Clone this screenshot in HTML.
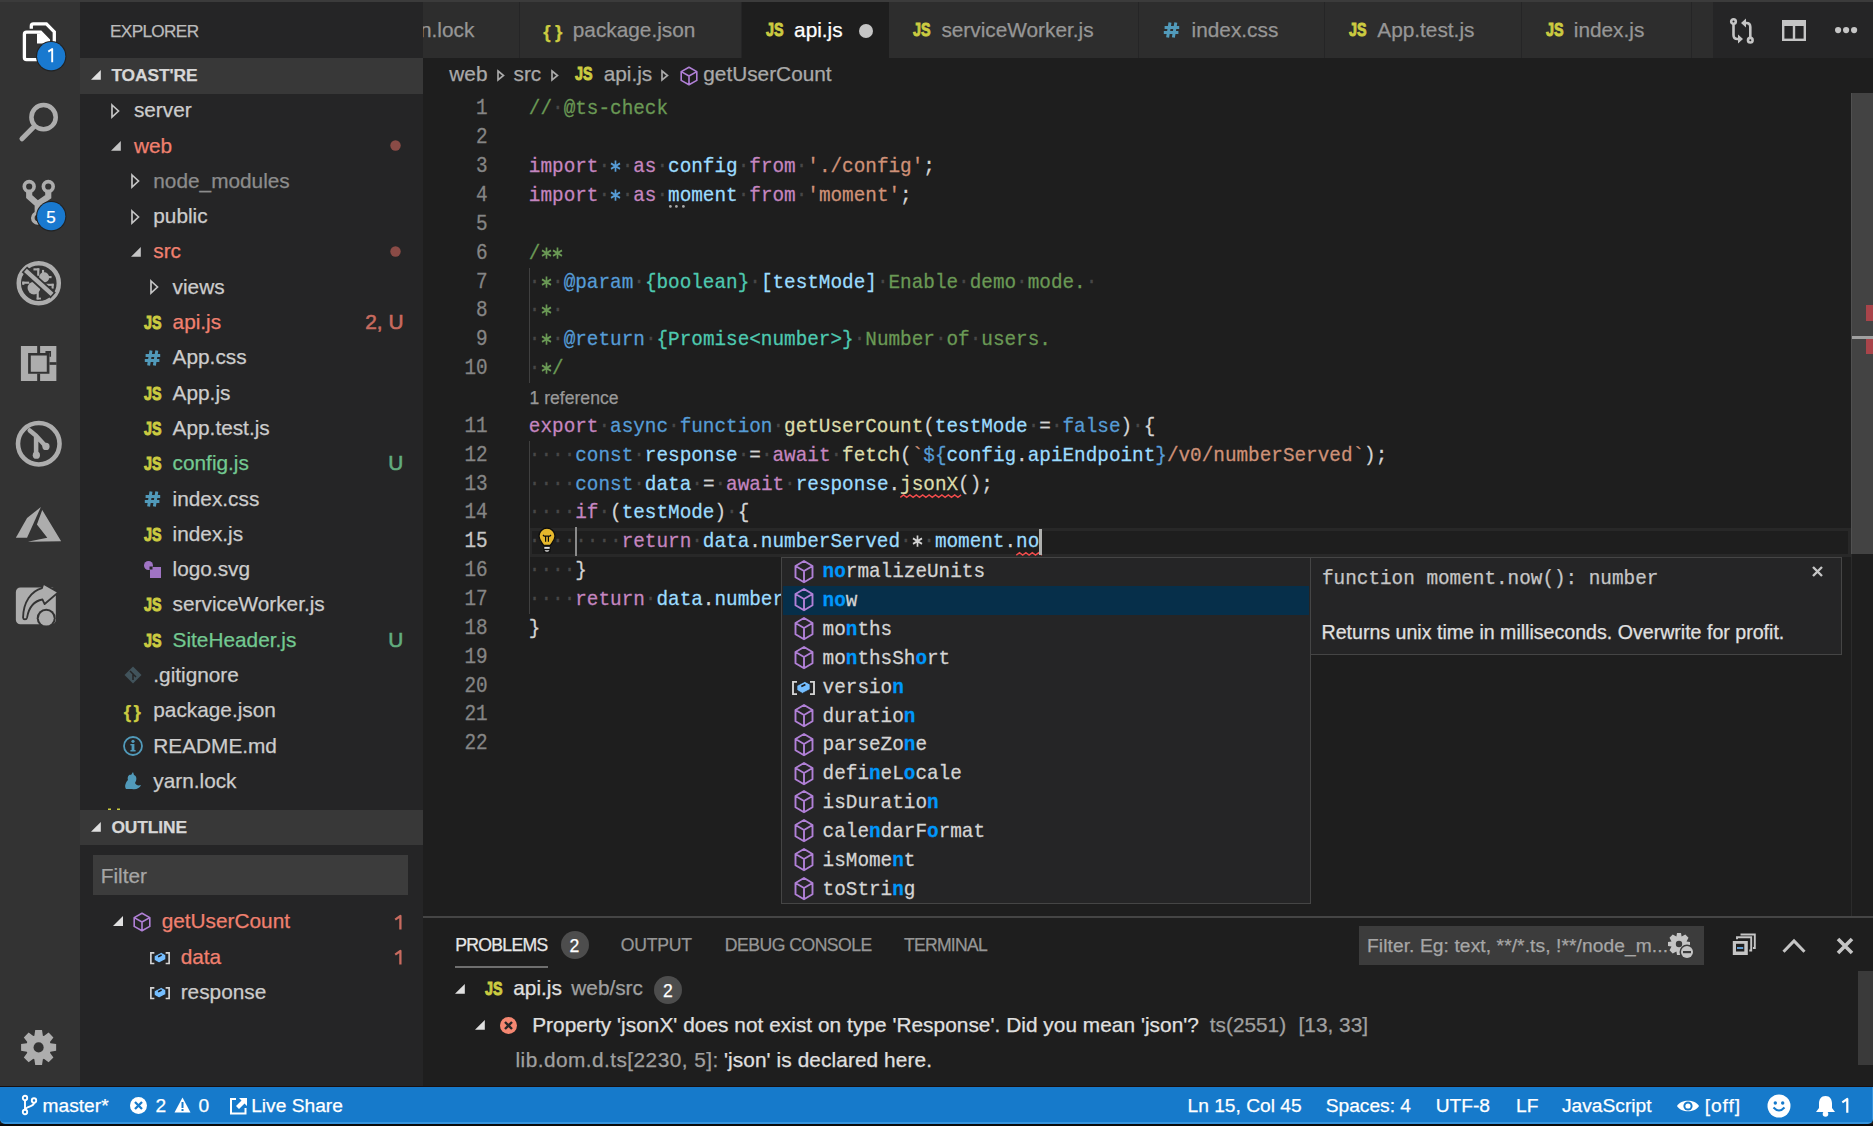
<!DOCTYPE html>
<html><head><meta charset="utf-8">
<style>
*{box-sizing:border-box;margin:0;padding:0}
html,body{width:1873px;height:1126px;overflow:hidden;background:#1e1e1e}
body{position:relative;font-family:"Liberation Sans",sans-serif;color:#cccccc}
.a{position:absolute}
.t{white-space:pre;-webkit-text-stroke:0.25px currentColor}
svg{overflow:visible}
</style></head><body>

<div class="a" style="left:0.00px;top:0.00px;width:1873.00px;height:2.00px;background:#3b3b3b;"></div>
<div class="a" style="left:0.00px;top:2.00px;width:79.50px;height:1085.50px;background:#333333;"></div>
<div class="a" style="left:79.50px;top:2.00px;width:343.00px;height:1085.50px;background:#252526;"></div>
<div class="a" style="left:422.50px;top:2.00px;width:1450.50px;height:56.00px;background:#252526;"></div>
<svg class="a" style="left:10.00px;top:15.00px;" width="60" height="60" viewBox="10 15 60 60">
      <path d="M31.3 31 V26 Q31.3 23.9 33.4 23.9 H46.4 L54.3 31.9 V46" fill="none" stroke="#ffffff" stroke-width="3.3"/>
      <path d="M24.4 34.3 Q24.4 32.2 26.5 32.2 H40.6 L48.4 40.1 V57.6 Q48.4 59.7 46.3 59.7 H26.5 Q24.4 59.7 24.4 57.6 Z" fill="#333333" stroke="#333333" stroke-width="7"/>
      <path d="M24.4 34.3 Q24.4 32.2 26.5 32.2 H40.6 L48.4 40.1 V57.6 Q48.4 59.7 46.3 59.7 H26.5 Q24.4 59.7 24.4 57.6 Z" fill="#333333" stroke="#ffffff" stroke-width="3.3"/>
      <path d="M37 33.5 H41.2 L48.6 41 V43.4 H37 Z" fill="#ffffff"/>
    </svg>
<svg class="a" style="left:37.40px;top:42.40px;" width="28.4" height="28.4" viewBox="0 0 28.4 28.4"><circle cx="14.2" cy="14.2" r="15.2" fill="#222222"/><circle cx="14.2" cy="14.2" r="14.1" fill="#1979cf"/><path d="M11.3 9.6 L15.2 7 V20.2" fill="none" stroke="#ffffff" stroke-width="1.9" stroke-linejoin="round"/></svg>
<svg class="a" style="left:10.00px;top:90.00px;" width="60" height="60" viewBox="0 0 1126 1126"><circle cx="630" cy="510" r="228" fill="none" stroke="#adadad" stroke-width="85"/><path d="M435 705 L225 915" stroke="#adadad" stroke-width="95" stroke-linecap="round"/></svg>
<svg class="a" style="left:10.00px;top:170.00px;" width="60" height="60" viewBox="0 0 1126 1126"><g fill="none" stroke="#adadad">
      <circle cx="360" cy="310" r="92" stroke-width="68"/>
      <circle cx="718" cy="310" r="92" stroke-width="68"/>
      <circle cx="520" cy="900" r="92" stroke-width="68"/>
      <path d="M360 400 V500 L520 640 V810 M718 400 V500 L520 640" stroke-width="115" stroke-linejoin="miter"/>
    </g></svg>
<svg class="a" style="left:37.40px;top:202.30px;" width="28.4" height="28.4" viewBox="0 0 28.4 28.4"><circle cx="14.2" cy="14.2" r="15.2" fill="#222222"/><circle cx="14.2" cy="14.2" r="14.1" fill="#1979cf"/></svg>
<div class="a t" style="left:46.30px;top:208.71px;font-size:17px;line-height:17px;color:#ffffff;font-family:'Liberation Sans',sans-serif;font-weight:400;">5</div>
<svg class="a" style="left:10.00px;top:255.00px;" width="60" height="60" viewBox="0 0 1126 1126">
      <circle cx="540" cy="530" r="376" fill="none" stroke="#adadad" stroke-width="84"/>
      <g fill="#adadad">
        <circle cx="450" cy="620" r="120"/>
        <circle cx="640" cy="420" r="95"/>
        <rect x="230" y="500" width="130" height="40"/>
        <rect x="230" y="500" width="40" height="60"/>
        <rect x="500" y="700" width="40" height="135"/>
        <rect x="500" y="800" width="80" height="35"/>
        <rect x="440" y="250" width="110" height="40"/>
        <rect x="510" y="250" width="40" height="140"/>
        <rect x="600" y="280" width="40" height="100"/>
        <rect x="680" y="395" width="100" height="40"/>
        <rect x="640" y="540" width="180" height="40"/>
        <rect x="780" y="540" width="40" height="90"/>
      </g>
      <path d="M270 270 L810 760" stroke="#333333" stroke-width="150"/>
      <path d="M290 290 L790 740" stroke="#adadad" stroke-width="80"/>
    </svg>
<svg class="a" style="left:10.00px;top:335.00px;" width="60" height="60" viewBox="0 0 1126 1126">
      <path d="M205 205 H870 V865 H205 Z M340 340 V725 H740 V340 Z" fill="#adadad" fill-rule="evenodd"/>
      <rect x="510" y="200" width="55" height="140" fill="#333333"/>
      <rect x="510" y="725" width="55" height="145" fill="#333333"/>
      <rect x="740" y="510" width="135" height="50" fill="#333333"/>
      <path d="M665 300 H770 V410 H740 V340 H665 Z" fill="#333333"/>
      <rect x="390" y="385" width="300" height="305" fill="#adadad"/>
    </svg>
<svg class="a" style="left:10.00px;top:415.00px;" width="60" height="60" viewBox="0 0 1126 1126">
      <circle cx="540" cy="540" r="390" fill="none" stroke="#adadad" stroke-width="86"/>
      <path d="M370 290 L490 390 V755 M490 390 L670 585" fill="none" stroke="#adadad" stroke-width="85" stroke-linecap="round" stroke-linejoin="round"/>
      <circle cx="495" cy="755" r="68" fill="#adadad"/>
      <circle cx="675" cy="590" r="68" fill="#adadad"/>
    </svg>
<svg class="a" style="left:10.00px;top:495.00px;" width="60" height="60" viewBox="0 0 1126 1126">
      <path d="M110 800 L320 430 L580 225 L320 800 Z" fill="#adadad"/>
      <path d="M605 280 L960 870 L330 875 L700 800 L505 555 Z" fill="#adadad"/>
    </svg>
<svg class="a" style="left:10.00px;top:575.00px;" width="60" height="60" viewBox="0 0 1126 1126">
      <rect x="110" y="235" width="750" height="690" rx="85" fill="#adadad"/>
      <path d="M870 300 V245 H600 Z" fill="#333333"/>
      <path d="M245 800 C250 500 400 300 600 245 L625 165 L905 325 L650 545 L610 460 C450 490 350 620 320 800 C310 845 250 845 245 800 Z" fill="#adadad" stroke="#333333" stroke-width="34" stroke-linejoin="round"/>
      <circle cx="680" cy="810" r="178" fill="#333333"/>
      <circle cx="680" cy="810" r="140" fill="#adadad"/>
    </svg>
<svg class="a" style="left:10.00px;top:1018.00px;" width="60" height="60" viewBox="0 0 1126 1126"><path d="M457.1 331.0 L473.2 223.1 L600.8 223.1 L616.9 331.0 L636.7 339.2 L724.4 274.3 L814.7 364.6 L749.8 452.3 L758.0 472.1 L865.9 488.2 L865.9 615.8 L758.0 631.9 L749.8 651.7 L814.7 739.4 L724.4 829.7 L636.7 764.8 L616.9 773.0 L600.8 880.9 L473.2 880.9 L457.1 773.0 L437.3 764.8 L349.6 829.7 L259.3 739.4 L324.2 651.7 L316.0 631.9 L208.1 615.8 L208.1 488.2 L316.0 472.1 L324.2 452.3 L259.3 364.6 L349.6 274.3 L437.3 339.2 Z" fill="#adadad"/><circle cx="537" cy="552" r="95" fill="#333333"/></svg>
<div class="a t" style="left:110.00px;top:22.64px;font-size:17.2px;line-height:17.2px;color:#bbbbbb;font-family:'Liberation Sans',sans-serif;font-weight:400;letter-spacing:-0.65px">EXPLORER</div>
<div class="a" style="left:79.50px;top:58.00px;width:343.00px;height:35.50px;background:#383838;"></div>
<svg class="a" style="left:90.70px;top:70.30px;" width="9.8" height="9.8" viewBox="0 0 9.8 9.8"><path d="M9.8 0 L9.8 9.8 L0 9.8 Z" fill="#e0e0e0"/></svg>
<div class="a t" style="left:111.40px;top:66.87px;font-size:17.4px;line-height:17.4px;color:#d7d7d7;font-family:'Liberation Sans',sans-serif;font-weight:700;letter-spacing:-0.1px">TOAST'RE</div>
<svg class="a" style="left:110.90px;top:103.65px;" width="9" height="14" viewBox="0 0 9 14"><path d="M1 1 L7.5 7 L1 13 Z" fill="none" stroke="#c5c5c5" stroke-width="1.7" stroke-linejoin="miter"/></svg>
<div class="a t" style="left:133.90px;top:100.24px;font-size:20.8px;line-height:20.8px;color:#cccccc;font-family:'Liberation Sans',sans-serif;font-weight:400;">server</div>
<svg class="a" style="left:110.90px;top:140.65px;" width="9.8" height="9.8" viewBox="0 0 9.8 9.8"><path d="M9.8 0 L9.8 9.8 L0 9.8 Z" fill="#c5c5c5"/></svg>
<div class="a t" style="left:133.90px;top:135.54px;font-size:20.8px;line-height:20.8px;color:#f0806f;font-family:'Liberation Sans',sans-serif;font-weight:400;">web</div>
<svg class="a" style="left:390.00px;top:140.45px;" width="11" height="11" viewBox="0 0 11 11"><circle cx="5.5" cy="5.5" r="5.2" fill="#8a4b46"/></svg>
<svg class="a" style="left:130.80px;top:174.25px;" width="9" height="14" viewBox="0 0 9 14"><path d="M1 1 L7.5 7 L1 13 Z" fill="none" stroke="#c5c5c5" stroke-width="1.7" stroke-linejoin="miter"/></svg>
<div class="a t" style="left:153.30px;top:170.84px;font-size:20.8px;line-height:20.8px;color:#8c8c8c;font-family:'Liberation Sans',sans-serif;font-weight:400;">node_modules</div>
<svg class="a" style="left:130.80px;top:209.55px;" width="9" height="14" viewBox="0 0 9 14"><path d="M1 1 L7.5 7 L1 13 Z" fill="none" stroke="#c5c5c5" stroke-width="1.7" stroke-linejoin="miter"/></svg>
<div class="a t" style="left:153.30px;top:206.14px;font-size:20.8px;line-height:20.8px;color:#cccccc;font-family:'Liberation Sans',sans-serif;font-weight:400;">public</div>
<svg class="a" style="left:130.80px;top:246.55px;" width="9.8" height="9.8" viewBox="0 0 9.8 9.8"><path d="M9.8 0 L9.8 9.8 L0 9.8 Z" fill="#c5c5c5"/></svg>
<div class="a t" style="left:153.30px;top:241.44px;font-size:20.8px;line-height:20.8px;color:#f0806f;font-family:'Liberation Sans',sans-serif;font-weight:400;">src</div>
<svg class="a" style="left:390.00px;top:246.35px;" width="11" height="11" viewBox="0 0 11 11"><circle cx="5.5" cy="5.5" r="5.2" fill="#8a4b46"/></svg>
<svg class="a" style="left:150.30px;top:280.15px;" width="9" height="14" viewBox="0 0 9 14"><path d="M1 1 L7.5 7 L1 13 Z" fill="none" stroke="#c5c5c5" stroke-width="1.7" stroke-linejoin="miter"/></svg>
<div class="a t" style="left:172.60px;top:276.74px;font-size:20.8px;line-height:20.8px;color:#cccccc;font-family:'Liberation Sans',sans-serif;font-weight:400;">views</div>
<svg class="a" style="left:144.30px;top:316.05px;" width="18" height="14" viewBox="0 0 18 14"><text x="0" y="12.6" textLength="17.5" lengthAdjust="spacingAndGlyphs" font-family="Liberation Sans" font-weight="700" font-size="17.5" fill="#cbcb41" stroke="#cbcb41" stroke-width="0.9">JS</text></svg>
<div class="a t" style="left:172.60px;top:312.04px;font-size:20.8px;line-height:20.8px;color:#f0806f;font-family:'Liberation Sans',sans-serif;font-weight:400;">api.js</div>
<div class="a t" style="left:365.30px;top:312.04px;font-size:20.8px;line-height:20.8px;color:#c86b5f;font-family:'Liberation Sans',sans-serif;font-weight:400;-webkit-text-stroke:0.6px #c86b5f">2, U</div>
<svg class="a" style="left:144.00px;top:349.95px;" width="18" height="16" viewBox="0 0 18 16"><g stroke="#519aba" stroke-width="3" fill="none"><path d="M7 0.5 L4.6 15.5 M12.8 0.5 L10.4 15.5 M1.6 5.4 H16.2 M0.8 10.6 H15.4"/></g></svg>
<div class="a t" style="left:172.60px;top:347.34px;font-size:20.8px;line-height:20.8px;color:#cccccc;font-family:'Liberation Sans',sans-serif;font-weight:400;">App.css</div>
<svg class="a" style="left:144.30px;top:386.65px;" width="18" height="14" viewBox="0 0 18 14"><text x="0" y="12.6" textLength="17.5" lengthAdjust="spacingAndGlyphs" font-family="Liberation Sans" font-weight="700" font-size="17.5" fill="#cbcb41" stroke="#cbcb41" stroke-width="0.9">JS</text></svg>
<div class="a t" style="left:172.60px;top:382.64px;font-size:20.8px;line-height:20.8px;color:#cccccc;font-family:'Liberation Sans',sans-serif;font-weight:400;">App.js</div>
<svg class="a" style="left:144.30px;top:421.95px;" width="18" height="14" viewBox="0 0 18 14"><text x="0" y="12.6" textLength="17.5" lengthAdjust="spacingAndGlyphs" font-family="Liberation Sans" font-weight="700" font-size="17.5" fill="#cbcb41" stroke="#cbcb41" stroke-width="0.9">JS</text></svg>
<div class="a t" style="left:172.60px;top:417.94px;font-size:20.8px;line-height:20.8px;color:#cccccc;font-family:'Liberation Sans',sans-serif;font-weight:400;">App.test.js</div>
<svg class="a" style="left:144.30px;top:457.25px;" width="18" height="14" viewBox="0 0 18 14"><text x="0" y="12.6" textLength="17.5" lengthAdjust="spacingAndGlyphs" font-family="Liberation Sans" font-weight="700" font-size="17.5" fill="#cbcb41" stroke="#cbcb41" stroke-width="0.9">JS</text></svg>
<div class="a t" style="left:172.60px;top:453.24px;font-size:20.8px;line-height:20.8px;color:#73c991;font-family:'Liberation Sans',sans-serif;font-weight:400;">config.js</div>
<div class="a t" style="left:388.30px;top:453.24px;font-size:20.8px;line-height:20.8px;color:#62ad7e;font-family:'Liberation Sans',sans-serif;font-weight:400;-webkit-text-stroke:0.6px #62ad7e">U</div>
<svg class="a" style="left:144.00px;top:491.15px;" width="18" height="16" viewBox="0 0 18 16"><g stroke="#519aba" stroke-width="3" fill="none"><path d="M7 0.5 L4.6 15.5 M12.8 0.5 L10.4 15.5 M1.6 5.4 H16.2 M0.8 10.6 H15.4"/></g></svg>
<div class="a t" style="left:172.60px;top:488.54px;font-size:20.8px;line-height:20.8px;color:#cccccc;font-family:'Liberation Sans',sans-serif;font-weight:400;">index.css</div>
<svg class="a" style="left:144.30px;top:527.85px;" width="18" height="14" viewBox="0 0 18 14"><text x="0" y="12.6" textLength="17.5" lengthAdjust="spacingAndGlyphs" font-family="Liberation Sans" font-weight="700" font-size="17.5" fill="#cbcb41" stroke="#cbcb41" stroke-width="0.9">JS</text></svg>
<div class="a t" style="left:172.60px;top:523.84px;font-size:20.8px;line-height:20.8px;color:#cccccc;font-family:'Liberation Sans',sans-serif;font-weight:400;">index.js</div>
<svg class="a" style="left:143.30px;top:559.75px;" width="20" height="20" viewBox="0 0 20 20"><circle cx="5.5" cy="5.5" r="4.5" fill="#a074c4"/><rect x="7" y="7" width="11" height="11" fill="#a074c4"/><rect x="6.5" y="6.5" width="3" height="3" fill="#252526"/></svg>
<div class="a t" style="left:172.60px;top:559.14px;font-size:20.8px;line-height:20.8px;color:#cccccc;font-family:'Liberation Sans',sans-serif;font-weight:400;">logo.svg</div>
<svg class="a" style="left:144.30px;top:598.45px;" width="18" height="14" viewBox="0 0 18 14"><text x="0" y="12.6" textLength="17.5" lengthAdjust="spacingAndGlyphs" font-family="Liberation Sans" font-weight="700" font-size="17.5" fill="#cbcb41" stroke="#cbcb41" stroke-width="0.9">JS</text></svg>
<div class="a t" style="left:172.60px;top:594.44px;font-size:20.8px;line-height:20.8px;color:#cccccc;font-family:'Liberation Sans',sans-serif;font-weight:400;">serviceWorker.js</div>
<svg class="a" style="left:144.30px;top:633.75px;" width="18" height="14" viewBox="0 0 18 14"><text x="0" y="12.6" textLength="17.5" lengthAdjust="spacingAndGlyphs" font-family="Liberation Sans" font-weight="700" font-size="17.5" fill="#cbcb41" stroke="#cbcb41" stroke-width="0.9">JS</text></svg>
<div class="a t" style="left:172.60px;top:629.74px;font-size:20.8px;line-height:20.8px;color:#73c991;font-family:'Liberation Sans',sans-serif;font-weight:400;">SiteHeader.js</div>
<div class="a t" style="left:388.30px;top:629.74px;font-size:20.8px;line-height:20.8px;color:#62ad7e;font-family:'Liberation Sans',sans-serif;font-weight:400;-webkit-text-stroke:0.6px #62ad7e">U</div>
<svg class="a" style="left:124.30px;top:665.65px;" width="18" height="18" viewBox="0 0 18 18"><path d="M9 0.5 L17.5 9 L9 17.5 L0.5 9 Z" fill="#41535b"/><path d="M6 5 L10 9 M9 8 V14 M9 8 L12 11" stroke="#252526" stroke-width="1.5"/></svg>
<div class="a t" style="left:153.30px;top:665.04px;font-size:20.8px;line-height:20.8px;color:#cccccc;font-family:'Liberation Sans',sans-serif;font-weight:400;">.gitignore</div>
<div class="a t" style="left:123.80px;top:702.36px;font-size:19px;line-height:19px;color:#cbcb41;font-family:'Liberation Sans',sans-serif;font-weight:700;letter-spacing:-1.5px">{ }</div>
<div class="a t" style="left:153.30px;top:700.34px;font-size:20.8px;line-height:20.8px;color:#cccccc;font-family:'Liberation Sans',sans-serif;font-weight:400;">package.json</div>
<svg class="a" style="left:123.30px;top:735.75px;" width="21" height="21" viewBox="0 0 21 21"><circle cx="10" cy="10" r="9" fill="none" stroke="#519aba" stroke-width="1.8"/><rect x="8.6" y="8" width="2.8" height="7" fill="#519aba"/><rect x="7.4" y="14" width="5.2" height="1.5" fill="#519aba"/><rect x="7.4" y="8" width="3" height="1.4" fill="#519aba"/><circle cx="10" cy="5.3" r="1.6" fill="#519aba"/></svg>
<div class="a t" style="left:153.30px;top:735.64px;font-size:20.8px;line-height:20.8px;color:#cccccc;font-family:'Liberation Sans',sans-serif;font-weight:400;">README.md</div>
<svg class="a" style="left:124.30px;top:770.55px;" width="18" height="20" viewBox="0 0 18 20"><path d="M2 18 C0 15 2 11 4 9 C3 6 5 3 7 4 L9 1 L10 4 C13 5 13 9 11 12 C12 14 14 15 17 14 C16 17 12 19 8 18 Z" fill="#519aba"/></svg>
<div class="a t" style="left:153.30px;top:770.94px;font-size:20.8px;line-height:20.8px;color:#cccccc;font-family:'Liberation Sans',sans-serif;font-weight:400;">yarn.lock</div>
<svg class="a" style="left:106.00px;top:806.50px;" width="16" height="4" viewBox="0 0 16 4"><rect x="2" y="1.5" width="3" height="2.5" fill="#cbcb41"/><rect x="11" y="1.5" width="3" height="2.5" fill="#cbcb41"/></svg>
<div class="a" style="left:79.50px;top:810.10px;width:343.00px;height:35.30px;background:#383838;"></div>
<svg class="a" style="left:90.70px;top:822.30px;" width="9.8" height="9.8" viewBox="0 0 9.8 9.8"><path d="M9.8 0 L9.8 9.8 L0 9.8 Z" fill="#e0e0e0"/></svg>
<div class="a t" style="left:111.40px;top:819.47px;font-size:17.4px;line-height:17.4px;color:#d7d7d7;font-family:'Liberation Sans',sans-serif;font-weight:700;letter-spacing:-0.1px">OUTLINE</div>
<div class="a" style="left:93.10px;top:855.40px;width:315.00px;height:40.00px;background:#3c3c3c;"></div>
<div class="a t" style="left:100.80px;top:865.99px;font-size:20.8px;line-height:20.8px;color:#a6a6a6;font-family:'Liberation Sans',sans-serif;font-weight:400;">Filter</div>
<svg class="a" style="left:112.90px;top:916.20px;" width="10" height="10" viewBox="0 0 10 10"><path d="M10 0 L10 10 L0 10 Z" fill="#e0e0e0"/></svg>
<svg class="a" style="left:132.50px;top:911.50px;" width="18" height="20" viewBox="0 0 18 20"><path d="M9 1.2 L16.8 5.6 V14.4 L9 18.8 L1.2 14.4 V5.6 Z M1.2 5.6 L9 10 L16.8 5.6 M9 10 V18.8" fill="none" stroke="#b180d7" stroke-width="1.6" stroke-linejoin="round"/></svg>
<div class="a t" style="left:161.70px;top:911.39px;font-size:20.8px;line-height:20.8px;color:#f0806f;font-family:'Liberation Sans',sans-serif;font-weight:400;">getUserCount</div>
<svg class="a" style="left:394.00px;top:914.50px;" width="9" height="15" viewBox="0 0 9 15"><path d="M1.2 4.6 L6.4 1 V14.5" fill="none" stroke="#c86b5f" stroke-width="2.3" stroke-linejoin="round"/></svg>
<svg class="a" style="left:149.90px;top:951.50px;" width="20" height="12.3" viewBox="0 0 23 14"><path d="M5 0.9 H1 V13.1 H5 M18 0.9 H22 V13.1 H18" fill="none" stroke="#d4d4d4" stroke-width="1.9"/><path d="M12.9 0.4 L18.1 3.3 V8.4 L10.4 12.4 L4.9 9.2 V4.6 Z" fill="#75beff" stroke="#1a1a1a" stroke-width="0.8"/><path d="M9.3 5.4 L13.4 3.4" stroke="#1a1a1a" stroke-width="1.7"/></svg>
<div class="a t" style="left:180.70px;top:946.69px;font-size:20.8px;line-height:20.8px;color:#f0806f;font-family:'Liberation Sans',sans-serif;font-weight:400;">data</div>
<svg class="a" style="left:394.00px;top:949.80px;" width="9" height="15" viewBox="0 0 9 15"><path d="M1.2 4.6 L6.4 1 V14.5" fill="none" stroke="#c86b5f" stroke-width="2.3" stroke-linejoin="round"/></svg>
<svg class="a" style="left:149.90px;top:986.90px;" width="20" height="12.3" viewBox="0 0 23 14"><path d="M5 0.9 H1 V13.1 H5 M18 0.9 H22 V13.1 H18" fill="none" stroke="#d4d4d4" stroke-width="1.9"/><path d="M12.9 0.4 L18.1 3.3 V8.4 L10.4 12.4 L4.9 9.2 V4.6 Z" fill="#75beff" stroke="#1a1a1a" stroke-width="0.8"/><path d="M9.3 5.4 L13.4 3.4" stroke="#1a1a1a" stroke-width="1.7"/></svg>
<div class="a t" style="left:180.70px;top:982.09px;font-size:20.8px;line-height:20.8px;color:#cccccc;font-family:'Liberation Sans',sans-serif;font-weight:400;">response</div>
<div class="a" style="left:422.5px;top:2px;width:1450.5px;height:56px;overflow:hidden">
<div class="a" style="left:0.00px;top:0.00px;width:97.60px;height:56.00px;background:#2d2d2d;border-right:1.6px solid #252526"></div>
<div class="a t" style="left:-2.50px;top:18.29px;font-size:20.8px;line-height:20.8px;color:#969696;font-family:'Liberation Sans',sans-serif;font-weight:400;">n.lock</div>
<div class="a" style="left:97.60px;top:0.00px;width:222.30px;height:56.00px;background:#2d2d2d;border-right:1.6px solid #252526"></div>
<div class="a t" style="left:120.80px;top:20.41px;font-size:19px;line-height:19px;color:#cbcb41;font-family:'Liberation Sans',sans-serif;font-weight:700;letter-spacing:-0.5px">{ }</div>
<div class="a t" style="left:150.30px;top:18.29px;font-size:20.8px;line-height:20.8px;color:#969696;font-family:'Liberation Sans',sans-serif;font-weight:400;">package.json</div>
<div class="a" style="left:319.90px;top:0.00px;width:146.30px;height:56.00px;background:#1e1e1e;"></div>
<svg class="a" style="left:343.40px;top:21.20px;" width="18" height="14" viewBox="0 0 18 14"><text x="0" y="12.6" textLength="17.5" lengthAdjust="spacingAndGlyphs" font-family="Liberation Sans" font-weight="700" font-size="17.5" fill="#cbcb41" stroke="#cbcb41" stroke-width="0.9">JS</text></svg>
<div class="a t" style="left:371.60px;top:18.29px;font-size:20.8px;line-height:20.8px;color:#ffffff;font-family:'Liberation Sans',sans-serif;font-weight:400;">api.js</div>
<svg class="a" style="left:436.60px;top:21.80px;" width="14" height="14" viewBox="0 0 14 14"><circle cx="7" cy="7" r="7" fill="#c5c5c5"/></svg>
<div class="a" style="left:466.20px;top:0.00px;width:250.50px;height:56.00px;background:#2d2d2d;border-right:1.6px solid #252526"></div>
<svg class="a" style="left:490.70px;top:21.20px;" width="18" height="14" viewBox="0 0 18 14"><text x="0" y="12.6" textLength="17.5" lengthAdjust="spacingAndGlyphs" font-family="Liberation Sans" font-weight="700" font-size="17.5" fill="#cbcb41" stroke="#cbcb41" stroke-width="0.9">JS</text></svg>
<div class="a t" style="left:518.90px;top:18.29px;font-size:20.8px;line-height:20.8px;color:#969696;font-family:'Liberation Sans',sans-serif;font-weight:400;">serviceWorker.js</div>
<div class="a" style="left:716.70px;top:0.00px;width:185.80px;height:56.00px;background:#2d2d2d;border-right:1.6px solid #252526"></div>
<svg class="a" style="left:740.80px;top:20.10px;" width="18" height="16" viewBox="0 0 18 16"><g stroke="#519aba" stroke-width="3" fill="none"><path d="M7 0.5 L4.6 15.5 M12.8 0.5 L10.4 15.5 M1.6 5.4 H16.2 M0.8 10.6 H15.4"/></g></svg>
<div class="a t" style="left:769.10px;top:18.29px;font-size:20.8px;line-height:20.8px;color:#969696;font-family:'Liberation Sans',sans-serif;font-weight:400;">index.css</div>
<div class="a" style="left:902.50px;top:0.00px;width:197.20px;height:56.00px;background:#2d2d2d;border-right:1.6px solid #252526"></div>
<svg class="a" style="left:926.60px;top:21.20px;" width="18" height="14" viewBox="0 0 18 14"><text x="0" y="12.6" textLength="17.5" lengthAdjust="spacingAndGlyphs" font-family="Liberation Sans" font-weight="700" font-size="17.5" fill="#cbcb41" stroke="#cbcb41" stroke-width="0.9">JS</text></svg>
<div class="a t" style="left:954.80px;top:18.29px;font-size:20.8px;line-height:20.8px;color:#969696;font-family:'Liberation Sans',sans-serif;font-weight:400;">App.test.js</div>
<div class="a" style="left:1099.70px;top:0.00px;width:169.60px;height:56.00px;background:#2d2d2d;border-right:1.6px solid #252526"></div>
<svg class="a" style="left:1123.10px;top:21.20px;" width="18" height="14" viewBox="0 0 18 14"><text x="0" y="12.6" textLength="17.5" lengthAdjust="spacingAndGlyphs" font-family="Liberation Sans" font-weight="700" font-size="17.5" fill="#cbcb41" stroke="#cbcb41" stroke-width="0.9">JS</text></svg>
<div class="a t" style="left:1151.30px;top:18.29px;font-size:20.8px;line-height:20.8px;color:#969696;font-family:'Liberation Sans',sans-serif;font-weight:400;">index.js</div>
<div class="a" style="left:1269.30px;top:0.00px;width:21.90px;height:56.00px;background:#2d2d2d;border-right:1.6px solid #252526"></div>
</div>
<svg class="a" style="left:1730.40px;top:17.50px;" width="24" height="26" viewBox="0 0 24 26"><g fill="none" stroke="#c5c5c5" stroke-width="2.6"><circle cx="3.5" cy="3.5" r="2.3"/><circle cx="20.3" cy="22.2" r="2.3"/><path d="M3.5 6 V17 Q3.5 21 7.5 21 H9"/><path d="M20.3 19.8 V9 Q20.3 5 16.3 5 H15"/></g><path d="M8 16.5 L13 21 L8 25.5 Z" fill="#c5c5c5"/><path d="M16 0.5 L11 5 L16 9.5 Z" fill="#c5c5c5"/></svg>
<svg class="a" style="left:1781.50px;top:19.70px;" width="24" height="21" viewBox="0 0 24 21"><rect x="1.2" y="1.2" width="21.6" height="18.6" fill="none" stroke="#c5c5c5" stroke-width="2.4"/><rect x="1" y="1" width="22" height="5" fill="#c5c5c5"/><rect x="10.8" y="1" width="2.4" height="19" fill="#c5c5c5"/></svg>
<svg class="a" style="left:1834.50px;top:26.80px;" width="6.2" height="6.2" viewBox="0 0 6.2 6.2"><circle cx="3.1" cy="3.1" r="3.1" fill="#c5c5c5"/></svg>
<svg class="a" style="left:1842.80px;top:26.80px;" width="6.2" height="6.2" viewBox="0 0 6.2 6.2"><circle cx="3.1" cy="3.1" r="3.1" fill="#c5c5c5"/></svg>
<svg class="a" style="left:1851.00px;top:26.80px;" width="6.2" height="6.2" viewBox="0 0 6.2 6.2"><circle cx="3.1" cy="3.1" r="3.1" fill="#c5c5c5"/></svg>
<div class="a t" style="left:449.30px;top:64.29px;font-size:20.8px;line-height:20.8px;color:#a9a9a9;font-family:'Liberation Sans',sans-serif;font-weight:400;">web</div>
<div class="a t" style="left:513.50px;top:64.29px;font-size:20.8px;line-height:20.8px;color:#a9a9a9;font-family:'Liberation Sans',sans-serif;font-weight:400;">src</div>
<div class="a t" style="left:603.70px;top:64.29px;font-size:20.8px;line-height:20.8px;color:#a9a9a9;font-family:'Liberation Sans',sans-serif;font-weight:400;">api.js</div>
<div class="a t" style="left:703.30px;top:64.29px;font-size:20.8px;line-height:20.8px;color:#a9a9a9;font-family:'Liberation Sans',sans-serif;font-weight:400;">getUserCount</div>
<svg class="a" style="left:496.50px;top:69.50px;" width="8" height="11" viewBox="0 0 8 11"><path d="M1 1 L6.5 5.5 L1 10 Z" fill="none" stroke="#a9a9a9" stroke-width="1.7"/></svg>
<svg class="a" style="left:551.40px;top:69.50px;" width="8" height="11" viewBox="0 0 8 11"><path d="M1 1 L6.5 5.5 L1 10 Z" fill="none" stroke="#a9a9a9" stroke-width="1.7"/></svg>
<svg class="a" style="left:660.90px;top:69.50px;" width="8" height="11" viewBox="0 0 8 11"><path d="M1 1 L6.5 5.5 L1 10 Z" fill="none" stroke="#a9a9a9" stroke-width="1.7"/></svg>
<svg class="a" style="left:575.30px;top:67.40px;" width="18" height="14" viewBox="0 0 18 14"><text x="0" y="12.6" textLength="17.5" lengthAdjust="spacingAndGlyphs" font-family="Liberation Sans" font-weight="700" font-size="17.5" fill="#cbcb41" stroke="#cbcb41" stroke-width="0.9">JS</text></svg>
<svg class="a" style="left:679.60px;top:65.80px;" width="18" height="20" viewBox="0 0 18 20"><path d="M9 1.2 L16.8 5.6 V14.4 L9 18.8 L1.2 14.4 V5.6 Z M1.2 5.6 L9 10 L16.8 5.6 M9 10 V18.8" fill="none" stroke="#b180d7" stroke-width="1.6" stroke-linejoin="round"/></svg>
<div class="a" style="left:528.6px;top:528.20px;width:1322.3px;height:28.86px;border:3px solid #282828"></div>
<div class="a" style="left:528.60px;top:267.66px;width:1.60px;height:115.44px;background:#404040;"></div>
<div class="a" style="left:528.60px;top:440.82px;width:1.60px;height:173.16px;background:#404040;"></div>
<div class="a" style="left:575.20px;top:527.40px;width:1.80px;height:28.86px;background:#8a8a8a;"></div>
<div class="a t" style="left:476.09px;top:100.38px;font-size:19.345px;line-height:19.345px;color:#858585;font-family:'Liberation Mono',monospace;font-weight:400;transform:scaleY(1.1);transform-origin:0 14.77px">1</div>
<div class="a t" style="left:476.09px;top:129.24px;font-size:19.345px;line-height:19.345px;color:#858585;font-family:'Liberation Mono',monospace;font-weight:400;transform:scaleY(1.1);transform-origin:0 14.77px">2</div>
<div class="a t" style="left:476.09px;top:158.10px;font-size:19.345px;line-height:19.345px;color:#858585;font-family:'Liberation Mono',monospace;font-weight:400;transform:scaleY(1.1);transform-origin:0 14.77px">3</div>
<div class="a t" style="left:476.09px;top:186.96px;font-size:19.345px;line-height:19.345px;color:#858585;font-family:'Liberation Mono',monospace;font-weight:400;transform:scaleY(1.1);transform-origin:0 14.77px">4</div>
<div class="a t" style="left:476.09px;top:215.82px;font-size:19.345px;line-height:19.345px;color:#858585;font-family:'Liberation Mono',monospace;font-weight:400;transform:scaleY(1.1);transform-origin:0 14.77px">5</div>
<div class="a t" style="left:476.09px;top:244.68px;font-size:19.345px;line-height:19.345px;color:#858585;font-family:'Liberation Mono',monospace;font-weight:400;transform:scaleY(1.1);transform-origin:0 14.77px">6</div>
<div class="a t" style="left:476.09px;top:273.54px;font-size:19.345px;line-height:19.345px;color:#858585;font-family:'Liberation Mono',monospace;font-weight:400;transform:scaleY(1.1);transform-origin:0 14.77px">7</div>
<div class="a t" style="left:476.09px;top:302.40px;font-size:19.345px;line-height:19.345px;color:#858585;font-family:'Liberation Mono',monospace;font-weight:400;transform:scaleY(1.1);transform-origin:0 14.77px">8</div>
<div class="a t" style="left:476.09px;top:331.26px;font-size:19.345px;line-height:19.345px;color:#858585;font-family:'Liberation Mono',monospace;font-weight:400;transform:scaleY(1.1);transform-origin:0 14.77px">9</div>
<div class="a t" style="left:464.49px;top:360.12px;font-size:19.345px;line-height:19.345px;color:#858585;font-family:'Liberation Mono',monospace;font-weight:400;transform:scaleY(1.1);transform-origin:0 14.77px">10</div>
<div class="a t" style="left:464.49px;top:417.84px;font-size:19.345px;line-height:19.345px;color:#858585;font-family:'Liberation Mono',monospace;font-weight:400;transform:scaleY(1.1);transform-origin:0 14.77px">11</div>
<div class="a t" style="left:464.49px;top:446.70px;font-size:19.345px;line-height:19.345px;color:#858585;font-family:'Liberation Mono',monospace;font-weight:400;transform:scaleY(1.1);transform-origin:0 14.77px">12</div>
<div class="a t" style="left:464.49px;top:475.56px;font-size:19.345px;line-height:19.345px;color:#858585;font-family:'Liberation Mono',monospace;font-weight:400;transform:scaleY(1.1);transform-origin:0 14.77px">13</div>
<div class="a t" style="left:464.49px;top:504.42px;font-size:19.345px;line-height:19.345px;color:#858585;font-family:'Liberation Mono',monospace;font-weight:400;transform:scaleY(1.1);transform-origin:0 14.77px">14</div>
<div class="a t" style="left:464.49px;top:533.28px;font-size:19.345px;line-height:19.345px;color:#c6c6c6;font-family:'Liberation Mono',monospace;font-weight:400;transform:scaleY(1.1);transform-origin:0 14.77px">15</div>
<div class="a t" style="left:464.49px;top:562.14px;font-size:19.345px;line-height:19.345px;color:#858585;font-family:'Liberation Mono',monospace;font-weight:400;transform:scaleY(1.1);transform-origin:0 14.77px">16</div>
<div class="a t" style="left:464.49px;top:591.00px;font-size:19.345px;line-height:19.345px;color:#858585;font-family:'Liberation Mono',monospace;font-weight:400;transform:scaleY(1.1);transform-origin:0 14.77px">17</div>
<div class="a t" style="left:464.49px;top:619.86px;font-size:19.345px;line-height:19.345px;color:#858585;font-family:'Liberation Mono',monospace;font-weight:400;transform:scaleY(1.1);transform-origin:0 14.77px">18</div>
<div class="a t" style="left:464.49px;top:648.72px;font-size:19.345px;line-height:19.345px;color:#858585;font-family:'Liberation Mono',monospace;font-weight:400;transform:scaleY(1.1);transform-origin:0 14.77px">19</div>
<div class="a t" style="left:464.49px;top:677.58px;font-size:19.345px;line-height:19.345px;color:#858585;font-family:'Liberation Mono',monospace;font-weight:400;transform:scaleY(1.1);transform-origin:0 14.77px">20</div>
<div class="a t" style="left:464.49px;top:706.44px;font-size:19.345px;line-height:19.345px;color:#858585;font-family:'Liberation Mono',monospace;font-weight:400;transform:scaleY(1.1);transform-origin:0 14.77px">21</div>
<div class="a t" style="left:464.49px;top:735.30px;font-size:19.345px;line-height:19.345px;color:#858585;font-family:'Liberation Mono',monospace;font-weight:400;transform:scaleY(1.1);transform-origin:0 14.77px">22</div>
<div class="a t" style="left:529.50px;top:390.30px;font-size:17.6px;line-height:17.6px;color:#999999;font-family:'Liberation Sans',sans-serif;font-weight:400;">1 reference</div>
<div class="a t" style="left:528.85px;top:100.38px;font-family:'Liberation Mono',monospace;font-size:19.345px;line-height:19.345px;transform:scaleY(1.06);transform-origin:0 14.82px"><span style="color:#6a9955">//</span><span style="color:#474747;position:relative;top:-1.5px">·</span><span style="color:#6a9955">@ts-check</span></div>
<div class="a t" style="left:528.85px;top:158.10px;font-family:'Liberation Mono',monospace;font-size:19.345px;line-height:19.345px;transform:scaleY(1.06);transform-origin:0 14.82px"><span style="color:#c586c0">import</span><span style="color:#474747;position:relative;top:-1.5px">·</span><span style="color:#569cd6"><span style="position:relative;color:transparent">*<svg style="position:absolute;left:0.3px;top:5.2px" width="11" height="11" viewBox="0 0 11 11"><path d="M5.5 0.3 V10.7 M1 2.9 L10 8.1 M1 8.1 L10 2.9" stroke="#569cd6" stroke-width="1.7"/></svg></span></span><span style="color:#474747;position:relative;top:-1.5px">·</span><span style="color:#c586c0">as</span><span style="color:#474747;position:relative;top:-1.5px">·</span><span style="color:#9cdcfe">config</span><span style="color:#474747;position:relative;top:-1.5px">·</span><span style="color:#c586c0">from</span><span style="color:#474747;position:relative;top:-1.5px">·</span><span style="color:#ce9178">'./config'</span><span style="color:#d4d4d4">;</span></div>
<div class="a t" style="left:528.85px;top:186.96px;font-family:'Liberation Mono',monospace;font-size:19.345px;line-height:19.345px;transform:scaleY(1.06);transform-origin:0 14.82px"><span style="color:#c586c0">import</span><span style="color:#474747;position:relative;top:-1.5px">·</span><span style="color:#569cd6"><span style="position:relative;color:transparent">*<svg style="position:absolute;left:0.3px;top:5.2px" width="11" height="11" viewBox="0 0 11 11"><path d="M5.5 0.3 V10.7 M1 2.9 L10 8.1 M1 8.1 L10 2.9" stroke="#569cd6" stroke-width="1.7"/></svg></span></span><span style="color:#474747;position:relative;top:-1.5px">·</span><span style="color:#c586c0">as</span><span style="color:#474747;position:relative;top:-1.5px">·</span><span style="color:#9cdcfe">moment</span><span style="color:#474747;position:relative;top:-1.5px">·</span><span style="color:#c586c0">from</span><span style="color:#474747;position:relative;top:-1.5px">·</span><span style="color:#ce9178">'moment'</span><span style="color:#d4d4d4">;</span></div>
<div class="a t" style="left:528.85px;top:244.68px;font-family:'Liberation Mono',monospace;font-size:19.345px;line-height:19.345px;transform:scaleY(1.06);transform-origin:0 14.82px"><span style="color:#6a9955">/<span style="position:relative;color:transparent">*<svg style="position:absolute;left:0.3px;top:5.2px" width="11" height="11" viewBox="0 0 11 11"><path d="M5.5 0.3 V10.7 M1 2.9 L10 8.1 M1 8.1 L10 2.9" stroke="#6a9955" stroke-width="1.7"/></svg></span><span style="position:relative;color:transparent">*<svg style="position:absolute;left:0.3px;top:5.2px" width="11" height="11" viewBox="0 0 11 11"><path d="M5.5 0.3 V10.7 M1 2.9 L10 8.1 M1 8.1 L10 2.9" stroke="#6a9955" stroke-width="1.7"/></svg></span></span></div>
<div class="a t" style="left:528.85px;top:273.54px;font-family:'Liberation Mono',monospace;font-size:19.345px;line-height:19.345px;transform:scaleY(1.06);transform-origin:0 14.82px"><span style="color:#474747;position:relative;top:-1.5px">·</span><span style="color:#6a9955"><span style="position:relative;color:transparent">*<svg style="position:absolute;left:0.3px;top:5.2px" width="11" height="11" viewBox="0 0 11 11"><path d="M5.5 0.3 V10.7 M1 2.9 L10 8.1 M1 8.1 L10 2.9" stroke="#6a9955" stroke-width="1.7"/></svg></span></span><span style="color:#474747;position:relative;top:-1.5px">·</span><span style="color:#569cd6">@param</span><span style="color:#474747;position:relative;top:-1.5px">·</span><span style="color:#4ec9b0">{boolean}</span><span style="color:#474747;position:relative;top:-1.5px">·</span><span style="color:#9cdcfe">[testMode]</span><span style="color:#474747;position:relative;top:-1.5px">·</span><span style="color:#6a9955">Enable</span><span style="color:#474747;position:relative;top:-1.5px">·</span><span style="color:#6a9955">demo</span><span style="color:#474747;position:relative;top:-1.5px">·</span><span style="color:#6a9955">mode.</span><span style="color:#474747;position:relative;top:-1.5px">·</span></div>
<div class="a t" style="left:528.85px;top:302.40px;font-family:'Liberation Mono',monospace;font-size:19.345px;line-height:19.345px;transform:scaleY(1.06);transform-origin:0 14.82px"><span style="color:#474747;position:relative;top:-1.5px">·</span><span style="color:#6a9955"><span style="position:relative;color:transparent">*<svg style="position:absolute;left:0.3px;top:5.2px" width="11" height="11" viewBox="0 0 11 11"><path d="M5.5 0.3 V10.7 M1 2.9 L10 8.1 M1 8.1 L10 2.9" stroke="#6a9955" stroke-width="1.7"/></svg></span></span><span style="color:#474747;position:relative;top:-1.5px">·</span></div>
<div class="a t" style="left:528.85px;top:331.26px;font-family:'Liberation Mono',monospace;font-size:19.345px;line-height:19.345px;transform:scaleY(1.06);transform-origin:0 14.82px"><span style="color:#474747;position:relative;top:-1.5px">·</span><span style="color:#6a9955"><span style="position:relative;color:transparent">*<svg style="position:absolute;left:0.3px;top:5.2px" width="11" height="11" viewBox="0 0 11 11"><path d="M5.5 0.3 V10.7 M1 2.9 L10 8.1 M1 8.1 L10 2.9" stroke="#6a9955" stroke-width="1.7"/></svg></span></span><span style="color:#474747;position:relative;top:-1.5px">·</span><span style="color:#569cd6">@return</span><span style="color:#474747;position:relative;top:-1.5px">·</span><span style="color:#4ec9b0">{Promise&lt;number&gt;}</span><span style="color:#474747;position:relative;top:-1.5px">·</span><span style="color:#6a9955">Number</span><span style="color:#474747;position:relative;top:-1.5px">·</span><span style="color:#6a9955">of</span><span style="color:#474747;position:relative;top:-1.5px">·</span><span style="color:#6a9955">users.</span></div>
<div class="a t" style="left:528.85px;top:360.12px;font-family:'Liberation Mono',monospace;font-size:19.345px;line-height:19.345px;transform:scaleY(1.06);transform-origin:0 14.82px"><span style="color:#474747;position:relative;top:-1.5px">·</span><span style="color:#6a9955"><span style="position:relative;color:transparent">*<svg style="position:absolute;left:0.3px;top:5.2px" width="11" height="11" viewBox="0 0 11 11"><path d="M5.5 0.3 V10.7 M1 2.9 L10 8.1 M1 8.1 L10 2.9" stroke="#6a9955" stroke-width="1.7"/></svg></span>/</span></div>
<div class="a t" style="left:528.85px;top:417.84px;font-family:'Liberation Mono',monospace;font-size:19.345px;line-height:19.345px;transform:scaleY(1.06);transform-origin:0 14.82px"><span style="color:#c586c0">export</span><span style="color:#474747;position:relative;top:-1.5px">·</span><span style="color:#569cd6">async</span><span style="color:#474747;position:relative;top:-1.5px">·</span><span style="color:#569cd6">function</span><span style="color:#474747;position:relative;top:-1.5px">·</span><span style="color:#dcdcaa">getUserCount</span><span style="color:#d4d4d4">(</span><span style="color:#9cdcfe">testMode</span><span style="color:#474747;position:relative;top:-1.5px">·</span><span style="color:#d4d4d4">=</span><span style="color:#474747;position:relative;top:-1.5px">·</span><span style="color:#569cd6">false</span><span style="color:#d4d4d4">)</span><span style="color:#474747;position:relative;top:-1.5px">·</span><span style="color:#d4d4d4">{</span></div>
<div class="a t" style="left:528.85px;top:446.70px;font-family:'Liberation Mono',monospace;font-size:19.345px;line-height:19.345px;transform:scaleY(1.06);transform-origin:0 14.82px"><span style="color:#474747;position:relative;top:-1.5px">····</span><span style="color:#569cd6">const</span><span style="color:#474747;position:relative;top:-1.5px">·</span><span style="color:#9cdcfe">response</span><span style="color:#474747;position:relative;top:-1.5px">·</span><span style="color:#d4d4d4">=</span><span style="color:#474747;position:relative;top:-1.5px">·</span><span style="color:#c586c0">await</span><span style="color:#474747;position:relative;top:-1.5px">·</span><span style="color:#dcdcaa">fetch</span><span style="color:#d4d4d4">(</span><span style="color:#ce9178">`</span><span style="color:#569cd6">${</span><span style="color:#9cdcfe">config</span><span style="color:#d4d4d4">.</span><span style="color:#9cdcfe">apiEndpoint</span><span style="color:#569cd6">}</span><span style="color:#ce9178">/v0/numberServed`</span><span style="color:#d4d4d4">)</span><span style="color:#d4d4d4">;</span></div>
<div class="a t" style="left:528.85px;top:475.56px;font-family:'Liberation Mono',monospace;font-size:19.345px;line-height:19.345px;transform:scaleY(1.06);transform-origin:0 14.82px"><span style="color:#474747;position:relative;top:-1.5px">····</span><span style="color:#569cd6">const</span><span style="color:#474747;position:relative;top:-1.5px">·</span><span style="color:#9cdcfe">data</span><span style="color:#474747;position:relative;top:-1.5px">·</span><span style="color:#d4d4d4">=</span><span style="color:#474747;position:relative;top:-1.5px">·</span><span style="color:#c586c0">await</span><span style="color:#474747;position:relative;top:-1.5px">·</span><span style="color:#9cdcfe">response</span><span style="color:#d4d4d4">.</span><span style="color:#dcdcaa">jsonX</span><span style="color:#d4d4d4">();</span></div>
<div class="a t" style="left:528.85px;top:504.42px;font-family:'Liberation Mono',monospace;font-size:19.345px;line-height:19.345px;transform:scaleY(1.06);transform-origin:0 14.82px"><span style="color:#474747;position:relative;top:-1.5px">····</span><span style="color:#c586c0">if</span><span style="color:#474747;position:relative;top:-1.5px">·</span><span style="color:#d4d4d4">(</span><span style="color:#9cdcfe">testMode</span><span style="color:#d4d4d4">)</span><span style="color:#474747;position:relative;top:-1.5px">·</span><span style="color:#d4d4d4">{</span></div>
<div class="a t" style="left:528.85px;top:533.28px;font-family:'Liberation Mono',monospace;font-size:19.345px;line-height:19.345px;transform:scaleY(1.06);transform-origin:0 14.82px"><span style="color:#474747;position:relative;top:-1.5px">········</span><span style="color:#c586c0">return</span><span style="color:#474747;position:relative;top:-1.5px">·</span><span style="color:#9cdcfe">data</span><span style="color:#d4d4d4">.</span><span style="color:#9cdcfe">numberServed</span><span style="color:#474747;position:relative;top:-1.5px">·</span><span style="color:#d4d4d4"><span style="position:relative;color:transparent">*<svg style="position:absolute;left:0.3px;top:5.2px" width="11" height="11" viewBox="0 0 11 11"><path d="M5.5 0.3 V10.7 M1 2.9 L10 8.1 M1 8.1 L10 2.9" stroke="#d4d4d4" stroke-width="1.7"/></svg></span></span><span style="color:#474747;position:relative;top:-1.5px">·</span><span style="color:#9cdcfe">moment</span><span style="color:#d4d4d4">.</span><span style="color:#9cdcfe">no</span></div>
<div class="a t" style="left:528.85px;top:562.14px;font-family:'Liberation Mono',monospace;font-size:19.345px;line-height:19.345px;transform:scaleY(1.06);transform-origin:0 14.82px"><span style="color:#474747;position:relative;top:-1.5px">····</span><span style="color:#d4d4d4">}</span></div>
<div class="a t" style="left:528.85px;top:591.00px;font-family:'Liberation Mono',monospace;font-size:19.345px;line-height:19.345px;transform:scaleY(1.06);transform-origin:0 14.82px"><span style="color:#474747;position:relative;top:-1.5px">····</span><span style="color:#c586c0">return</span><span style="color:#474747;position:relative;top:-1.5px">·</span><span style="color:#9cdcfe">data</span><span style="color:#d4d4d4">.</span><span style="color:#9cdcfe">numberServed</span><span style="color:#d4d4d4">;</span></div>
<div class="a t" style="left:528.85px;top:619.86px;font-family:'Liberation Mono',monospace;font-size:19.345px;line-height:19.345px;transform:scaleY(1.06);transform-origin:0 14.82px"><span style="color:#d4d4d4">}</span></div>
<svg class="a" style="left:538.00px;top:527.00px;" width="18" height="26" viewBox="0 0 18 26"><path d="M5.6 18.3 C4 15.4 1 13.2 1 9 C1 4.6 4.6 1.2 9 1.2 C13.4 1.2 17 4.6 17 9 C17 13.2 14 15.4 12.4 18.3 Z" fill="#e6b82c" stroke="#0d0d0d" stroke-width="1.3"/><path d="M5 8 L6.2 9.2 H11.8 L13 8 M7.6 9.2 V14.8 M10.4 9.2 V14.8" fill="none" stroke="#0d0d0d" stroke-width="1.2"/><rect x="5.5" y="19.2" width="7" height="6.4" rx="1.5" fill="#0d0d0d"/><rect x="6.3" y="19.9" width="5.4" height="1.9" fill="#e2e2e2"/><path d="M6.8 23.2 H11.2 V24 Q9 25.6 6.8 24 Z" fill="#e2e2e2"/></svg>
<svg class="a" style="left:0;top:0" width="1873" height="1126"><path d="M900.3 497.4 L903.5 494.9 L906.7 497.4 L909.9 494.9 L913.1 497.4 L916.3 494.9 L919.5 497.4 L922.7 494.9 L925.9 497.4 L929.1 494.9 L932.3 497.4 L935.5 494.9 L938.7 497.4 L941.9 494.9 L945.1 497.4 L948.3 494.9 L951.5 497.4 L954.7 494.9 L957.9 497.4 L961.1 494.9" fill="none" stroke="#f14c4c" stroke-width="1.4"/></svg>
<svg class="a" style="left:0;top:0" width="1873" height="1126"><path d="M1016.3 555.1 L1019.5 552.6 L1022.7 555.1 L1025.9 552.6 L1029.1 555.1 L1032.3 552.6 L1035.5 555.1 L1038.7 552.6 L1041.9 555.1" fill="none" stroke="#f14c4c" stroke-width="1.4"/></svg>
<div class="a" style="left:1039.26px;top:529.40px;width:2.40px;height:26.00px;background:#aeafad;"></div>
<svg class="a" style="left:668.60px;top:205.30px;" width="2.8" height="2.8" viewBox="0 0 2.8 2.8"><circle cx="1.4" cy="1.4" r="1.4" fill="#a8a8a8"/></svg>
<svg class="a" style="left:675.10px;top:205.30px;" width="2.8" height="2.8" viewBox="0 0 2.8 2.8"><circle cx="1.4" cy="1.4" r="1.4" fill="#a8a8a8"/></svg>
<svg class="a" style="left:681.60px;top:205.30px;" width="2.8" height="2.8" viewBox="0 0 2.8 2.8"><circle cx="1.4" cy="1.4" r="1.4" fill="#a8a8a8"/></svg>
<div class="a" style="left:1850.90px;top:92.80px;width:22.10px;height:461.00px;background:#434343;"></div>
<div class="a" style="left:1850.90px;top:92.80px;width:1.20px;height:461.00px;background:#505050;"></div>
<div class="a" style="left:1866.10px;top:305.20px;width:6.90px;height:16.00px;background:#a8444a;"></div>
<div class="a" style="left:1866.10px;top:338.80px;width:6.90px;height:15.20px;background:#a8444a;"></div>
<div class="a" style="left:1851.50px;top:336.40px;width:21.50px;height:2.80px;background:#a0a0a0;"></div>
<div class="a" style="left:1850.90px;top:553.80px;width:1.20px;height:363.00px;background:#2b2b2b;"></div>
<div class="a" style="left:781.30px;top:556.90px;width:529.70px;height:347.50px;background:#252526;border:1.6px solid #454545"></div>
<div class="a" style="left:782.90px;top:586.30px;width:526.50px;height:28.86px;background:#062f4a;"></div>
<svg class="a" style="left:794.00px;top:559.50px;" width="20" height="24" viewBox="0 0 20 24"><path d="M10 1 L18.5 6 V17.3 L10 22.3 L1.5 17.3 V6 Z M1.5 6 L10 11 L18.5 6 M10 11 V22.3" fill="none" stroke="#b180d7" stroke-width="1.9" stroke-linejoin="round"/></svg>
<div class="a t" style="left:822.6px;top:563.28px;font-family:'Liberation Mono',monospace;font-size:19.345px;line-height:19.345px;color:#d4d4d4;transform:scaleY(1.06);transform-origin:0 14.82px"><span style="color:#0097fb;font-weight:700">n</span><span style="color:#0097fb;font-weight:700">o</span>rmalizeUnits</div>
<svg class="a" style="left:794.00px;top:588.36px;" width="20" height="24" viewBox="0 0 20 24"><path d="M10 1 L18.5 6 V17.3 L10 22.3 L1.5 17.3 V6 Z M1.5 6 L10 11 L18.5 6 M10 11 V22.3" fill="none" stroke="#b180d7" stroke-width="1.9" stroke-linejoin="round"/></svg>
<div class="a t" style="left:822.6px;top:592.14px;font-family:'Liberation Mono',monospace;font-size:19.345px;line-height:19.345px;color:#d4d4d4;transform:scaleY(1.06);transform-origin:0 14.82px"><span style="color:#0097fb;font-weight:700">n</span><span style="color:#0097fb;font-weight:700">o</span>w</div>
<svg class="a" style="left:794.00px;top:617.22px;" width="20" height="24" viewBox="0 0 20 24"><path d="M10 1 L18.5 6 V17.3 L10 22.3 L1.5 17.3 V6 Z M1.5 6 L10 11 L18.5 6 M10 11 V22.3" fill="none" stroke="#b180d7" stroke-width="1.9" stroke-linejoin="round"/></svg>
<div class="a t" style="left:822.6px;top:621.00px;font-family:'Liberation Mono',monospace;font-size:19.345px;line-height:19.345px;color:#d4d4d4;transform:scaleY(1.06);transform-origin:0 14.82px">mo<span style="color:#0097fb;font-weight:700">n</span>ths</div>
<svg class="a" style="left:794.00px;top:646.08px;" width="20" height="24" viewBox="0 0 20 24"><path d="M10 1 L18.5 6 V17.3 L10 22.3 L1.5 17.3 V6 Z M1.5 6 L10 11 L18.5 6 M10 11 V22.3" fill="none" stroke="#b180d7" stroke-width="1.9" stroke-linejoin="round"/></svg>
<div class="a t" style="left:822.6px;top:649.86px;font-family:'Liberation Mono',monospace;font-size:19.345px;line-height:19.345px;color:#d4d4d4;transform:scaleY(1.06);transform-origin:0 14.82px">mo<span style="color:#0097fb;font-weight:700">n</span>thsSh<span style="color:#0097fb;font-weight:700">o</span>rt</div>
<svg class="a" style="left:792.00px;top:680.54px;" width="23" height="14" viewBox="0 0 23 14"><path d="M5 0.9 H1 V13.1 H5 M18 0.9 H22 V13.1 H18" fill="none" stroke="#d4d4d4" stroke-width="1.9"/><path d="M12.9 0.4 L18.1 3.3 V8.4 L10.4 12.4 L4.9 9.2 V4.6 Z" fill="#75beff" stroke="#1a1a1a" stroke-width="0.8"/><path d="M9.3 5.4 L13.4 3.4" stroke="#1a1a1a" stroke-width="1.7"/></svg>
<div class="a t" style="left:822.6px;top:678.72px;font-family:'Liberation Mono',monospace;font-size:19.345px;line-height:19.345px;color:#d4d4d4;transform:scaleY(1.06);transform-origin:0 14.82px">versio<span style="color:#0097fb;font-weight:700">n</span></div>
<svg class="a" style="left:794.00px;top:703.80px;" width="20" height="24" viewBox="0 0 20 24"><path d="M10 1 L18.5 6 V17.3 L10 22.3 L1.5 17.3 V6 Z M1.5 6 L10 11 L18.5 6 M10 11 V22.3" fill="none" stroke="#b180d7" stroke-width="1.9" stroke-linejoin="round"/></svg>
<div class="a t" style="left:822.6px;top:707.58px;font-family:'Liberation Mono',monospace;font-size:19.345px;line-height:19.345px;color:#d4d4d4;transform:scaleY(1.06);transform-origin:0 14.82px">duratio<span style="color:#0097fb;font-weight:700">n</span></div>
<svg class="a" style="left:794.00px;top:732.66px;" width="20" height="24" viewBox="0 0 20 24"><path d="M10 1 L18.5 6 V17.3 L10 22.3 L1.5 17.3 V6 Z M1.5 6 L10 11 L18.5 6 M10 11 V22.3" fill="none" stroke="#b180d7" stroke-width="1.9" stroke-linejoin="round"/></svg>
<div class="a t" style="left:822.6px;top:736.44px;font-family:'Liberation Mono',monospace;font-size:19.345px;line-height:19.345px;color:#d4d4d4;transform:scaleY(1.06);transform-origin:0 14.82px">parseZo<span style="color:#0097fb;font-weight:700">n</span>e</div>
<svg class="a" style="left:794.00px;top:761.52px;" width="20" height="24" viewBox="0 0 20 24"><path d="M10 1 L18.5 6 V17.3 L10 22.3 L1.5 17.3 V6 Z M1.5 6 L10 11 L18.5 6 M10 11 V22.3" fill="none" stroke="#b180d7" stroke-width="1.9" stroke-linejoin="round"/></svg>
<div class="a t" style="left:822.6px;top:765.30px;font-family:'Liberation Mono',monospace;font-size:19.345px;line-height:19.345px;color:#d4d4d4;transform:scaleY(1.06);transform-origin:0 14.82px">defi<span style="color:#0097fb;font-weight:700">n</span>eL<span style="color:#0097fb;font-weight:700">o</span>cale</div>
<svg class="a" style="left:794.00px;top:790.38px;" width="20" height="24" viewBox="0 0 20 24"><path d="M10 1 L18.5 6 V17.3 L10 22.3 L1.5 17.3 V6 Z M1.5 6 L10 11 L18.5 6 M10 11 V22.3" fill="none" stroke="#b180d7" stroke-width="1.9" stroke-linejoin="round"/></svg>
<div class="a t" style="left:822.6px;top:794.16px;font-family:'Liberation Mono',monospace;font-size:19.345px;line-height:19.345px;color:#d4d4d4;transform:scaleY(1.06);transform-origin:0 14.82px">isDuratio<span style="color:#0097fb;font-weight:700">n</span></div>
<svg class="a" style="left:794.00px;top:819.24px;" width="20" height="24" viewBox="0 0 20 24"><path d="M10 1 L18.5 6 V17.3 L10 22.3 L1.5 17.3 V6 Z M1.5 6 L10 11 L18.5 6 M10 11 V22.3" fill="none" stroke="#b180d7" stroke-width="1.9" stroke-linejoin="round"/></svg>
<div class="a t" style="left:822.6px;top:823.02px;font-family:'Liberation Mono',monospace;font-size:19.345px;line-height:19.345px;color:#d4d4d4;transform:scaleY(1.06);transform-origin:0 14.82px">cale<span style="color:#0097fb;font-weight:700">n</span>darF<span style="color:#0097fb;font-weight:700">o</span>rmat</div>
<svg class="a" style="left:794.00px;top:848.10px;" width="20" height="24" viewBox="0 0 20 24"><path d="M10 1 L18.5 6 V17.3 L10 22.3 L1.5 17.3 V6 Z M1.5 6 L10 11 L18.5 6 M10 11 V22.3" fill="none" stroke="#b180d7" stroke-width="1.9" stroke-linejoin="round"/></svg>
<div class="a t" style="left:822.6px;top:851.88px;font-family:'Liberation Mono',monospace;font-size:19.345px;line-height:19.345px;color:#d4d4d4;transform:scaleY(1.06);transform-origin:0 14.82px">isMome<span style="color:#0097fb;font-weight:700">n</span>t</div>
<svg class="a" style="left:794.00px;top:876.96px;" width="20" height="24" viewBox="0 0 20 24"><path d="M10 1 L18.5 6 V17.3 L10 22.3 L1.5 17.3 V6 Z M1.5 6 L10 11 L18.5 6 M10 11 V22.3" fill="none" stroke="#b180d7" stroke-width="1.9" stroke-linejoin="round"/></svg>
<div class="a t" style="left:822.6px;top:880.74px;font-family:'Liberation Mono',monospace;font-size:19.345px;line-height:19.345px;color:#d4d4d4;transform:scaleY(1.06);transform-origin:0 14.82px">toStri<span style="color:#0097fb;font-weight:700">n</span>g</div>
<div class="a" style="left:1310.90px;top:556.90px;width:531.10px;height:98.60px;background:#252526;border:1.6px solid #454545;border-left:none"></div>
<div class="a t" style="left:1322.00px;top:570.38px;font-size:19.345px;line-height:19.345px;color:#c6c6c6;font-family:'Liberation Mono',monospace;font-weight:400;">function moment.now(): number</div>
<div class="a t" style="left:1321.50px;top:622.60px;font-size:19.6px;line-height:19.6px;color:#e0e0e0;font-family:'Liberation Sans',sans-serif;font-weight:400;">Returns unix time in milliseconds. Overwrite for profit.</div>
<svg class="a" style="left:1812.30px;top:566.20px;" width="11" height="11" viewBox="0 0 11 11"><path d="M1 1 L10 10 M10 1 L1 10" stroke="#c5c5c5" stroke-width="2.4"/></svg>
<div class="a" style="left:422.50px;top:916.20px;width:1450.50px;height:1.60px;background:#454545;"></div>
<div class="a t" style="left:455.30px;top:937.10px;font-size:17.6px;line-height:17.6px;color:#e7e7e7;font-family:'Liberation Sans',sans-serif;font-weight:400;letter-spacing:-0.7px">PROBLEMS</div>
<svg class="a" style="left:560.70px;top:931.30px;" width="28" height="28" viewBox="0 0 28 28"><circle cx="14" cy="14" r="14" fill="#4d4d4d"/></svg>
<div class="a t" style="left:569.50px;top:937.60px;font-size:17.6px;line-height:17.6px;color:#ffffff;font-family:'Liberation Sans',sans-serif;font-weight:400;">2</div>
<div class="a" style="left:455.30px;top:966.40px;width:92.30px;height:1.60px;background:#6f6f6f;"></div>
<div class="a t" style="left:620.70px;top:937.10px;font-size:17.6px;line-height:17.6px;color:#969696;font-family:'Liberation Sans',sans-serif;font-weight:400;letter-spacing:-0.2px">OUTPUT</div>
<div class="a t" style="left:724.80px;top:937.10px;font-size:17.6px;line-height:17.6px;color:#969696;font-family:'Liberation Sans',sans-serif;font-weight:400;letter-spacing:-0.5px">DEBUG CONSOLE</div>
<div class="a t" style="left:904.00px;top:937.10px;font-size:17.6px;line-height:17.6px;color:#969696;font-family:'Liberation Sans',sans-serif;font-weight:400;letter-spacing:-0.75px">TERMINAL</div>
<div class="a" style="left:1358.90px;top:926.30px;width:345.10px;height:38.60px;background:#3c3c3c;"></div>
<div class="a t" style="left:1367.00px;top:936.24px;font-size:19.2px;line-height:19.2px;color:#a6a6a6;font-family:'Liberation Sans',sans-serif;font-weight:400;letter-spacing:0.09px">Filter. Eg: text, **/*.ts, !**/node_m...</div>
<svg class="a" style="left:1667.00px;top:932.00px;" width="28" height="28" viewBox="0 0 28 28"><g fill="#c5c5c5"><circle cx="12" cy="12" r="7.5"/><path d="M10 1 H14 L14.6 4.5 L18.3 2.5 L21.5 5.7 L19.5 9.4 L23 10 V14 L19.5 14.6 L21.5 18.3 L18.3 21.5 L14.6 19.5 L14 23 H10 L9.4 19.5 L5.7 21.5 L2.5 18.3 L4.5 14.6 L1 14 V10 L4.5 9.4 L2.5 5.7 L5.7 2.5 L9.4 4.5 Z"/></g><circle cx="12" cy="12" r="3.2" fill="#3c3c3c"/><circle cx="20" cy="20" r="7.5" fill="#3c3c3c"/><circle cx="20" cy="20" r="6" fill="#c5c5c5"/><rect x="16" y="19" width="8" height="2.2" fill="#3c3c3c"/></svg>
<svg class="a" style="left:1731.00px;top:933.00px;" width="25" height="23" viewBox="0 0 25 23"><g fill="none" stroke="#c5c5c5" stroke-width="1.9"><path d="M6 6.2 V4.3 H20.2 V17.5 H18.3"/><path d="M9.5 1.5 H23.8 V15 H21.9"/></g><rect x="1" y="7.2" width="16.6" height="15" fill="#1e1e1e"/><rect x="1.8" y="8" width="15" height="14" fill="#c5c5c5"/><rect x="5" y="10.8" width="8.3" height="7.7" fill="#1e1e1e"/><rect x="6" y="14.2" width="6.2" height="1.6" fill="#75beff"/></svg>
<svg class="a" style="left:1781.50px;top:937.50px;" width="24" height="16" viewBox="0 0 24 16"><path d="M1.5 13.8 L12 3 L22.5 13.8" fill="none" stroke="#c5c5c5" stroke-width="3"/></svg>
<svg class="a" style="left:1836.00px;top:936.50px;" width="18" height="18" viewBox="0 0 18 18"><path d="M2 2 L16 16 M16 2 L2 16" stroke="#c5c5c5" stroke-width="3.6"/></svg>
<div class="a" style="left:1857.70px;top:971.40px;width:15.30px;height:93.60px;background:#3a3a3a;"></div>
<svg class="a" style="left:454.80px;top:984.30px;" width="9.8" height="9.8" viewBox="0 0 9.8 9.8"><path d="M9.8 0 L9.8 9.8 L0 9.8 Z" fill="#e0e0e0"/></svg>
<svg class="a" style="left:485.30px;top:982.20px;" width="18" height="14" viewBox="0 0 18 14"><text x="0" y="12.6" textLength="17.5" lengthAdjust="spacingAndGlyphs" font-family="Liberation Sans" font-weight="700" font-size="17.5" fill="#cbcb41" stroke="#cbcb41" stroke-width="0.9">JS</text></svg>
<div class="a t" style="left:513.30px;top:978.19px;font-size:20.8px;line-height:20.8px;color:#e0e0e0;font-family:'Liberation Sans',sans-serif;font-weight:400;">api.js</div>
<div class="a t" style="left:571.30px;top:978.19px;font-size:20.8px;line-height:20.8px;color:#a0a0a0;font-family:'Liberation Sans',sans-serif;font-weight:400;">web/src</div>
<svg class="a" style="left:654.20px;top:976.30px;" width="28" height="28" viewBox="0 0 28 28"><circle cx="14" cy="14" r="14" fill="#4d4d4d"/></svg>
<div class="a t" style="left:663.00px;top:982.60px;font-size:17.6px;line-height:17.6px;color:#ffffff;font-family:'Liberation Sans',sans-serif;font-weight:400;">2</div>
<svg class="a" style="left:474.80px;top:1020.20px;" width="9.8" height="9.8" viewBox="0 0 9.8 9.8"><path d="M9.8 0 L9.8 9.8 L0 9.8 Z" fill="#e0e0e0"/></svg>
<svg class="a" style="left:500.40px;top:1017.00px;" width="17" height="17" viewBox="0 0 17 17"><circle cx="8.5" cy="8.5" r="8.5" fill="#f48771"/><path d="M5 5 L12 12 M12 5 L5 12" stroke="#252526" stroke-width="2.4"/></svg>
<div class="a t" style="left:532.20px;top:1014.79px;font-size:20.8px;line-height:20.8px;color:#e0e0e0;font-family:'Liberation Sans',sans-serif;font-weight:400;letter-spacing:0.05px">Property 'jsonX' does not exist on type 'Response'. Did you mean 'json'?</div>
<div class="a t" style="left:1209.80px;top:1014.79px;font-size:20.8px;line-height:20.8px;color:#a0a0a0;font-family:'Liberation Sans',sans-serif;font-weight:400;">ts(2551)</div>
<div class="a t" style="left:1298.60px;top:1014.79px;font-size:20.8px;line-height:20.8px;color:#a0a0a0;font-family:'Liberation Sans',sans-serif;font-weight:400;">[13, 33]</div>
<div class="a t" style="left:515.50px;top:1049.99px;font-size:20.8px;line-height:20.8px;color:#a0a0a0;font-family:'Liberation Sans',sans-serif;font-weight:400;letter-spacing:0.46px">lib.dom.d.ts[2230, 5]:</div>
<div class="a t" style="left:724.00px;top:1049.99px;font-size:20.8px;line-height:20.8px;color:#e0e0e0;font-family:'Liberation Sans',sans-serif;font-weight:400;letter-spacing:0.1px">'json' is declared here.</div>
<div class="a" style="left:422.5px;top:1084px;width:1430px;height:3.5px;overflow:hidden">
<div class="a t" style="left:110.00px;top:2.39px;font-size:20.8px;line-height:20.8px;color:#9a9a9a;font-family:'Liberation Sans',sans-serif;font-weight:400;">Property  jsonX  does not exist on type  Response .  Did you mean  json?  ts(2551)  [13, 33]</div>
</div>
<div class="a" style="left:0.00px;top:1085.60px;width:1873.00px;height:1.60px;background:#1a1010;"></div>
<div class="a" style="left:0.00px;top:1087.20px;width:1873.00px;height:36.80px;background:#3593dc;border-radius:0 0 5px 5px"></div>
<div class="a" style="left:0.00px;top:1087.20px;width:1871.80px;height:34.70px;background:#167acb;border-radius:0 0 0 4px"></div>
<svg class="a" style="left:22.40px;top:1095.00px;" width="15" height="20" viewBox="0 0 15 20"><g fill="none" stroke="#ffffff" stroke-width="1.9"><circle cx="3" cy="3" r="2.2"/><circle cx="12" cy="5.5" r="2.2"/><circle cx="3" cy="17" r="2.2"/><path d="M3 5.2 V14.8 M12 7.7 C12 12 4 11 3.5 14.5"/></g></svg>
<div class="a t" style="left:42.50px;top:1095.94px;font-size:19.2px;line-height:19.2px;color:#ffffff;font-family:'Liberation Sans',sans-serif;font-weight:400;">master*</div>
<svg class="a" style="left:129.60px;top:1097.20px;" width="17" height="17" viewBox="0 0 17 17"><circle cx="8.5" cy="8.5" r="8.5" fill="#ffffff"/><path d="M5 5 L12 12 M12 5 L5 12" stroke="#167acb" stroke-width="2.3"/></svg>
<div class="a t" style="left:155.50px;top:1095.94px;font-size:19.2px;line-height:19.2px;color:#ffffff;font-family:'Liberation Sans',sans-serif;font-weight:400;">2</div>
<svg class="a" style="left:173.70px;top:1096.50px;" width="17" height="16" viewBox="0 0 17 16"><path d="M8.5 0.5 L16.5 15.5 H0.5 Z" fill="#ffffff"/><rect x="7.5" y="5" width="2" height="6" fill="#167acb"/><rect x="7.5" y="12" width="2" height="2" fill="#167acb"/></svg>
<div class="a t" style="left:198.60px;top:1095.94px;font-size:19.2px;line-height:19.2px;color:#ffffff;font-family:'Liberation Sans',sans-serif;font-weight:400;">0</div>
<svg class="a" style="left:228.70px;top:1096.50px;" width="19" height="18" viewBox="0 0 19 18"><path d="M7 2 H2 V16.5 H16.5 V11" fill="none" stroke="#ffffff" stroke-width="2"/><path d="M10 1 H18 V9 L15.5 6.5 L10 12 L7 9 L12.5 3.5 Z" fill="#ffffff"/></svg>
<div class="a t" style="left:251.20px;top:1095.94px;font-size:19.2px;line-height:19.2px;color:#ffffff;font-family:'Liberation Sans',sans-serif;font-weight:400;">Live Share</div>
<div class="a t" style="left:1187.50px;top:1095.94px;font-size:19.2px;line-height:19.2px;color:#ffffff;font-family:'Liberation Sans',sans-serif;font-weight:400;">Ln 15, Col 45</div>
<div class="a t" style="left:1325.70px;top:1095.94px;font-size:19.2px;line-height:19.2px;color:#ffffff;font-family:'Liberation Sans',sans-serif;font-weight:400;">Spaces: 4</div>
<div class="a t" style="left:1435.70px;top:1095.94px;font-size:19.2px;line-height:19.2px;color:#ffffff;font-family:'Liberation Sans',sans-serif;font-weight:400;">UTF-8</div>
<div class="a t" style="left:1516.00px;top:1095.94px;font-size:19.2px;line-height:19.2px;color:#ffffff;font-family:'Liberation Sans',sans-serif;font-weight:400;">LF</div>
<div class="a t" style="left:1562.00px;top:1095.94px;font-size:19.2px;line-height:19.2px;color:#ffffff;font-family:'Liberation Sans',sans-serif;font-weight:400;">JavaScript</div>
<div class="a t" style="left:1704.80px;top:1095.94px;font-size:19.2px;line-height:19.2px;color:#ffffff;font-family:'Liberation Sans',sans-serif;font-weight:400;letter-spacing:0.9px">[off]</div>
<svg class="a" style="left:1675.90px;top:1097.50px;" width="24" height="16" viewBox="0 0 24 16"><path d="M1 8 C5 1 19 1 23 8 C19 15 5 15 1 8 Z" fill="#ffffff"/><circle cx="12" cy="8" r="4.6" fill="#167acb"/><circle cx="12" cy="8" r="2.6" fill="#ffffff"/></svg>
<svg class="a" style="left:1766.60px;top:1093.80px;" width="24" height="24" viewBox="0 0 24 24"><circle cx="12" cy="12" r="11.5" fill="#ffffff"/><circle cx="8.3" cy="9" r="1.7" fill="#167acb"/><circle cx="15.7" cy="9" r="1.7" fill="#167acb"/><path d="M6.5 13.5 Q12 19.5 17.5 13.5" fill="none" stroke="#167acb" stroke-width="2"/></svg>
<svg class="a" style="left:1841.00px;top:1097.60px;" width="9" height="15" viewBox="0 0 9 15"><path d="M1.3 4.3 L6.3 1 V14.8" fill="none" stroke="#ffffff" stroke-width="2.2" stroke-linejoin="round"/></svg>
<svg class="a" style="left:1814.90px;top:1094.50px;" width="21" height="22" viewBox="0 0 21 22"><path d="M10.5 1 C6 1 4 4.5 4 8.5 V13 L1 17 H20 L17 13 V8.5 C17 4.5 15 1 10.5 1 Z" fill="#ffffff"/><circle cx="10.5" cy="19" r="2.8" fill="#ffffff"/></svg>
<div class="a" style="left:0.00px;top:1124.00px;width:1873.00px;height:2.00px;background:#0a0a0a;"></div>
</body></html>
